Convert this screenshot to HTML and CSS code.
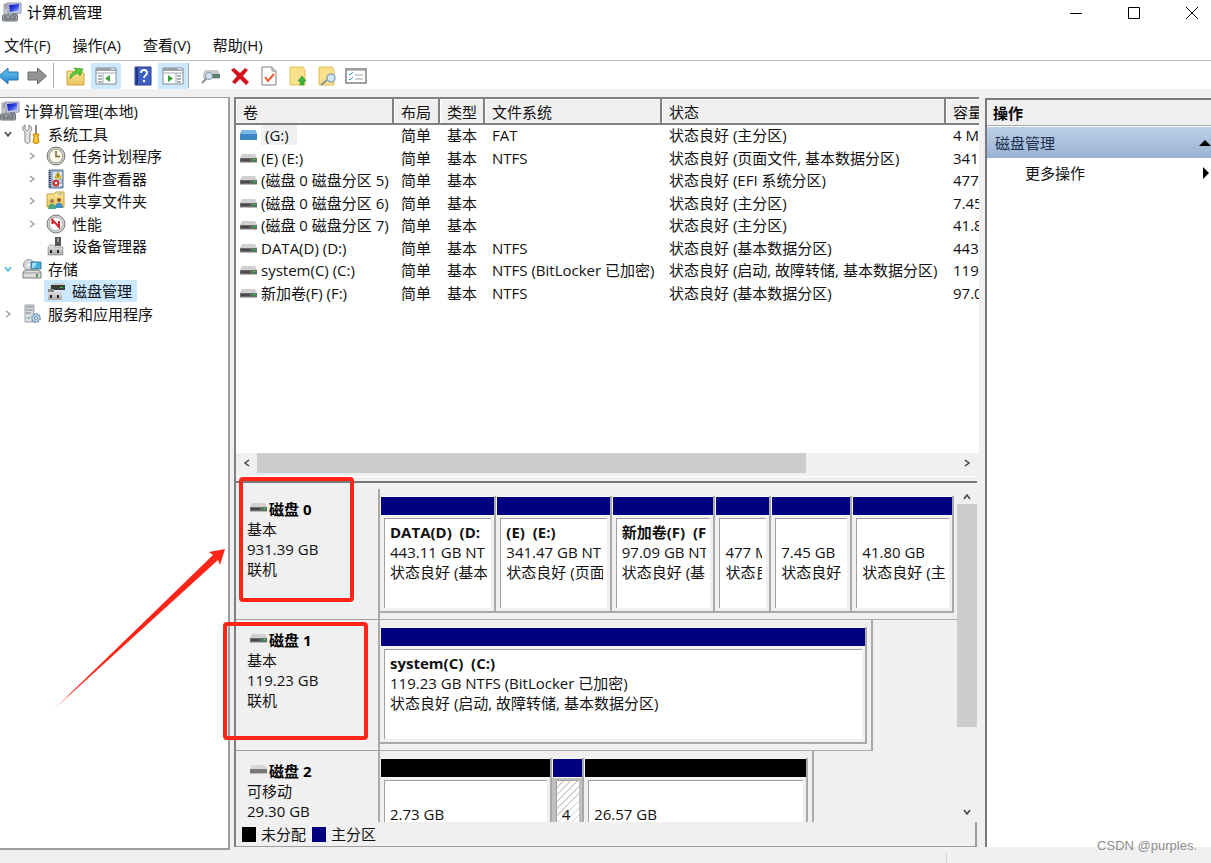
FILE: index.html
```html
<!DOCTYPE html>
<html lang="zh-CN">
<head>
<meta charset="utf-8">
<title>计算机管理</title>
<link rel="stylesheet" href="styles.css">
</head>
<body>
<svg class="defs" aria-hidden="true">
  <defs>
    <linearGradient id="g-blue" x1="0" y1="0" x2="0" y2="1"><stop offset="0" stop-color="#6fc4f2"/><stop offset="1" stop-color="#1f86d0"/></linearGradient>
    <linearGradient id="g-screen" x1="0" y1="0" x2="1" y2="1"><stop offset="0" stop-color="#0a14a8"/><stop offset=".5" stop-color="#2b3fe0"/><stop offset="1" stop-color="#b7c8ff"/></linearGradient>
    <linearGradient id="g-metal" x1="0" y1="0" x2="0" y2="1"><stop offset="0" stop-color="#e4e4e4"/><stop offset="1" stop-color="#a9a9a9"/></linearGradient>
    <linearGradient id="g-folder" x1="0" y1="0" x2="0" y2="1"><stop offset="0" stop-color="#fbe69a"/><stop offset="1" stop-color="#e9c558"/></linearGradient>
    <symbol id="computer" viewBox="0 0 20 20">
      <path d="M5 1h14v10l-13 1z" fill="#c4c9dc" stroke="#8f96b4"/><path d="M7 3l10-1v7l-9 1z" fill="url(#g-screen)"/>
      <path d="M2 2h4v11H2z" fill="#c7c9d2" stroke="#83868f" stroke-width=".7"/><path d="M3 4h2M3 6h2" stroke="#777"/>
      <path d="M10 11h5l1 4h-6z" fill="#84889b"/><rect x=".5" y="13" width="15" height="6" rx="1" fill="#a4a8ad" stroke="#6d7276"/><path d="M2 15h3M7 15h3M11 15h3M2 17h12" stroke="#535b60"/>
    </symbol>
    <symbol id="tools" viewBox="0 0 20 20">
      <path d="M3 1v4l2 2 2-2V1c4 2 3 6 1 7v9c0 3-5 3-5 0V8C0 6 0 2 3 1z" fill="#e2e2e2" stroke="#858585"/>
      <path d="M13 1h2v9h-2z" fill="#8d8d8d"/><path d="M11 10h6l-1 3 1 5c-1 2-5 2-6 0l1-5z" fill="#f5b921" stroke="#c8860c"/><path d="M14 13v5" stroke="#ffe17a"/>
    </symbol>
    <symbol id="clock" viewBox="0 0 20 20">
      <circle cx="10" cy="10" r="9" fill="#c8c8c8" stroke="#777"/><circle cx="10" cy="10" r="6.8" fill="#fbf7ea" stroke="#a9a48f"/><path d="M10 5v5.5h4" fill="none" stroke="#7d6a31" stroke-width="1.5"/>
    </symbol>
    <symbol id="events" viewBox="0 0 20 20">
      <path d="M3 1h14v18H3z" fill="#9eb3cd" stroke="#54708f"/><path d="M7 3h9v14H7z" fill="#dfe8f2"/><path d="M4 3v15" stroke="#3b3f49" stroke-width="2" stroke-dasharray="1 1"/>
      <path d="M12 3l3 6H9z" fill="#ffe326" stroke="#c09c05"/><path d="M12 5v3" stroke="#333"/><circle cx="10" cy="14" r="3" fill="#e5403a" stroke="#b31f1b"/><path d="M9 13l2 2m0-2l-2 2" stroke="#fff"/><path d="M13 11h3M14 14h2" stroke="#6c87c0"/>
    </symbol>
    <symbol id="share" viewBox="0 0 20 20">
      <path d="M1 3h7l2-2h8v15H1z" fill="url(#g-folder)" stroke="#c99d35"/><path d="M12 3h4" stroke="#66a8d5"/>
      <circle cx="6" cy="10" r="2" fill="#a97749"/><circle cx="13" cy="9" r="2" fill="#8a5c35"/><path d="M2 18c0-7 8-7 8 0z" fill="#4aa97c"/><path d="M9 17c0-7 8-7 8 0z" fill="#3f8fc5"/>
    </symbol>
    <symbol id="perf" viewBox="0 0 20 20">
      <circle cx="10" cy="10" r="9" fill="#d2d2d2" stroke="#777"/><circle cx="10" cy="10" r="6.7" fill="#fff" stroke="#aaa"/><path d="M6.500 10V6l6.500 7V7" fill="none" stroke="#d3212a" stroke-width="2"/>
    </symbol>
    <symbol id="device" viewBox="0 0 20 20">
      <path d="M9 1h6v9H9z" fill="#555"/><path d="M11 2h2v4h-2z" fill="#999"/><path d="M4 9h4l1 2h8v8H2v-8z" fill="url(#g-metal)" stroke="#858585" stroke-width=".6"/><path d="M4 14h2v3H4zM11 14h2v3h-2z" fill="#222"/>
    </symbol>
    <symbol id="storage" viewBox="0 0 20 20">
      <circle cx="7" cy="6" r="5.5" fill="#d5d9df" stroke="#9097a0"/><circle cx="7" cy="6" r="1.5" fill="#fff"/><path d="M9 3h10v7H9z" fill="#3fb0e0" stroke="#437990"/><path d="M10 4h5l-3 5h-2z" fill="#a0def6"/>
      <path d="M1 13l3-2h12l3 2v6H1z" fill="#dcdcdc" stroke="#787878"/><path d="M2 14h16" stroke="#999"/><path d="M14 15h2v3h-2z" fill="#46a344"/>
    </symbol>
    <symbol id="diskmgmt" viewBox="0 0 20 20">
      <path d="M4 4l3-2h11l1 2v5H4z" fill="#c8cac8"/><path d="M5 4h14v5H5z" fill="#3a3e3a"/><path d="M14 6h3v1h-3z" fill="#46c246"/><path d="M2 10h14v9H2z" fill="url(#g-metal)"/><path d="M4 14h2v3H4zM11 14h2v3h-2z" fill="#222"/><path d="M2 8h6v3H2z" fill="#888"/>
    </symbol>
    <symbol id="services" viewBox="0 0 20 20">
      <path d="M3 1h9v17H3z" fill="#d9dde1" stroke="#9aa1a8"/><path d="M4 3h7M4 6h7M4 9h5" stroke="#7c848c"/><path d="M5 14h3" stroke="#55aa55"/>
      <circle cx="14" cy="14" r="4" fill="#c0d8ed" stroke="#789ebe" stroke-width="2" stroke-dasharray="2 1"/><circle cx="14" cy="14" r="1.5" fill="#fff" stroke="#6a8dac"/>
    </symbol>
    <symbol id="drive" viewBox="0 0 17 11">
      <path d="M2 1h13l2 4H0z" fill="#d0d0d0"/><path d="M0 5h17v4H0z" fill="#6a6f6c"/><path d="M0 9h17v1H0z" fill="#b9b9b9"/><path d="M1 6h9v2H1z" fill="#484848"/><path d="M12 6h4v2h-4z" fill="#2e8a43"/><path d="M14 6h1v1h-1z" fill="#71e77f"/>
    </symbol>
    <symbol id="removable" viewBox="0 0 17 11">
      <path d="M2 0h13l2 4v6H0V4z" fill="#3f86c6"/><path d="M2 0h13l2 4H0z" fill="#78b7e6"/>
    </symbol>
    <symbol id="blankdrive" viewBox="0 0 17 11"><path d="M2 1h13l2 4H0z" fill="#d7d7d7"/><path d="M0 5h17v4H0z" fill="#777"/><path d="M0 9h17v1H0z" fill="#bcbcbc"/></symbol>
    <symbol id="arrow-left" viewBox="0 0 20 20"><path d="M-1 10l9-8v4h10v8H8v4z" stroke-linejoin="round"/></symbol>
    <symbol id="arrow-right" viewBox="0 0 20 20"><path d="M19.500 10l-9-8v4H1v8h9.500v4z" stroke-linejoin="round"/></symbol>
    <symbol id="folder-up" viewBox="0 0 20 20">
      <path d="M1 5h6l2 2h9v12H1z" fill="url(#g-folder)" stroke="#cda341"/><path d="M4 13c0-5 2-7 6-8l-2-3 9 1-3 7-2-3c-4 1-5 3-8 6z" fill="#5cc936" stroke="#3b9d20" stroke-width=".7"/>
    </symbol>
    <symbol id="pane-left" viewBox="0 0 22 18">
      <path d="M1 1h20v16H1z" fill="#fff" stroke="#868c93"/><path d="M1 1h20v3H1z" fill="#9aa1a9"/><path d="M16 2h4" stroke="#fff"/><path d="M1 6h20M8 6v11" stroke="#a5abb1"/><path d="M3 9h4M3 12h4M3 15h4" stroke="#5f6b78"/><path d="M15 8v7l-5-3.500z" fill="#35a435"/>
    </symbol>
    <symbol id="pane-right" viewBox="0 0 22 18">
      <path d="M1 1h20v16H1z" fill="#fff" stroke="#868c93"/><path d="M1 1h20v3H1z" fill="#9aa1a9"/><path d="M16 2h4" stroke="#fff"/><path d="M1 6h20M14 6v11" stroke="#a5abb1"/><path d="M15 9h4M15 12h4M15 15h4" stroke="#5f6b78"/><path d="M6 8v7l5-3.500z" fill="#35a435"/>
    </symbol>
    <symbol id="help" viewBox="0 0 18 20">
      <path d="M1 1h16v18H1z" fill="#3f5fc4" stroke="#2c3f8e"/><path d="M2 1h2v18H2z" fill="#24377f"/><path d="M7 7c0-4 6-4 6 0 0 2-3 2.500-3 5" fill="none" stroke="#fff" stroke-width="1.800"/><circle cx="10" cy="15" r="1.200" fill="#fff"/>
    </symbol>
    <symbol id="rescan" viewBox="0 0 20 20">
      <path d="M4 4h13l2 4v5H2V8z" fill="#c9ccce"/><path d="M5 8h14v4H5z" fill="#6a7478"/><path d="M14 9h3v2h-3z" fill="#2f9c46"/><circle cx="8" cy="10" r="3.500" fill="#cfe4f1" stroke="#849aaa"/><path d="M5.500 12.500L1 17" stroke="#8a9299" stroke-width="2"/>
    </symbol>
    <symbol id="delete" viewBox="0 0 20 20"><path d="M1 4l3-2 6 5 5-5 3 2-5 6 6 6-3 3-6-6-5 5-3-2 5-6z" fill="#d4121e"/></symbol>
    <symbol id="doc-check" viewBox="0 0 16 20"><path d="M1 1h10l4 4v14H1z" fill="#fdfdfd" stroke="#7f7f7f"/><path d="M11 1v4h4" fill="#ddd" stroke="#8f8f8f"/><path d="M4 11l3 4 6-7" fill="none" stroke="#ee5b32" stroke-width="2"/></symbol>
    <symbol id="doc-up" viewBox="0 0 18 20"><path d="M1 1h13l2 3v15H1z" fill="#fae08b" stroke="#dfbf5b"/><path d="M13 10l4 5h-2v4h-4v-4H9z" fill="#3cb53a" stroke="#238522" stroke-width=".5"/></symbol>
    <symbol id="doc-find" viewBox="0 0 20 20"><path d="M2 1h13l2 3v15H2z" fill="#fae08b" stroke="#dfbf5b"/><path d="M10 14l-6 5" stroke="#8d9499" stroke-width="2"/><circle cx="14" cy="12" r="4" fill="#cfe6f4" stroke="#8aa7bb" stroke-width="1.500"/></symbol>
    <symbol id="list" viewBox="0 0 22 18"><path d="M1 2h20v14H1z" fill="#fff" stroke="#7c8287" stroke-width="1.500"/><path d="M1 3h20" stroke="#8c9298"/><path d="M4 7l1 1 3-3M4 12l1 1 3-3" fill="none" stroke="#4096cf"/><path d="M10 8h8M10 12h8" stroke="#9fa6ac"/></symbol>
    <symbol id="chevron" viewBox="0 0 10 10"><path d="M3 2l4 3-4 3" fill="none" stroke="currentColor" stroke-width="1.500"/></symbol>
  </defs>
</svg>

<div class="window">
  <header class="titlebar">
    <svg class="icon"><use href="#computer"/></svg>
    <h1>计算机管理</h1>
    <div class="controls">
      <button aria-label="最小化"><svg viewBox="0 0 12 12"><path d="M0 6.500h12"/></svg></button>
      <button aria-label="最大化"><svg viewBox="0 0 12 12"><path d="M.5.5h11v11H.5z"/></svg></button>
      <button aria-label="关闭"><svg viewBox="0 0 12 12"><path d="M0 0l12 12M12 0L0 12"/></svg></button>
    </div>
  </header>
  <nav class="menubar">
    <button>文件(F)</button><button>操作(A)</button><button>查看(V)</button><button>帮助(H)</button>
  </nav>
  <div class="toolbar">
    <button class="back" aria-label="后退"><svg class="icon"><use href="#arrow-left"/></svg></button>
    <button class="forward" aria-label="前进"><svg class="icon"><use href="#arrow-right"/></svg></button>
    <span class="sep"></span>
    <button aria-label="上一级"><svg class="icon"><use href="#folder-up"/></svg></button>
    <button class="on" aria-label="显示控制台树"><svg class="icon wide"><use href="#pane-left"/></svg></button>
    <button class="after" aria-label="帮助"><svg class="icon"><use href="#help"/></svg></button>
    <button class="on" aria-label="显示操作窗格"><svg class="icon wide"><use href="#pane-right"/></svg></button>
    <span class="sep"></span>
    <button aria-label="重新扫描"><svg class="icon"><use href="#rescan"/></svg></button>
    <button aria-label="删除"><svg class="icon"><use href="#delete"/></svg></button>
    <button aria-label="属性"><svg class="icon"><use href="#doc-check"/></svg></button>
    <button aria-label="打开"><svg class="icon"><use href="#doc-up"/></svg></button>
    <button aria-label="查找"><svg class="icon"><use href="#doc-find"/></svg></button>
    <button aria-label="设置"><svg class="icon wide"><use href="#list"/></svg></button>
  </div>

  <main class="panes">
    <ul class="tree">
      <li class="root"><svg class="icon"><use href="#computer"/></svg><span>计算机管理(本地)</span></li>
      <li class="open dark"><svg class="chev"><use href="#chevron"/></svg><svg class="icon"><use href="#tools"/></svg><span>系统工具</span></li>
      <li class="sub"><svg class="chev"><use href="#chevron"/></svg><svg class="icon"><use href="#clock"/></svg><span>任务计划程序</span></li>
      <li class="sub"><svg class="chev"><use href="#chevron"/></svg><svg class="icon"><use href="#events"/></svg><span>事件查看器</span></li>
      <li class="sub"><svg class="chev"><use href="#chevron"/></svg><svg class="icon"><use href="#share"/></svg><span>共享文件夹</span></li>
      <li class="sub"><svg class="chev"><use href="#chevron"/></svg><svg class="icon"><use href="#perf"/></svg><span>性能</span></li>
      <li class="sub"><i class="chev"></i><svg class="icon"><use href="#device"/></svg><span>设备管理器</span></li>
      <li class="open cyan"><svg class="chev"><use href="#chevron"/></svg><svg class="icon"><use href="#storage"/></svg><span>存储</span></li>
      <li class="sub"><i class="chev"></i><div class="selected"><svg class="icon"><use href="#diskmgmt"/></svg><span>磁盘管理</span></div></li>
      <li><svg class="chev"><use href="#chevron"/></svg><svg class="icon"><use href="#services"/></svg><span>服务和应用程序</span></li>
    </ul>

    <section class="center">
      <div class="volumes">
        <table>
          <colgroup><col class="c-vol"><col class="c-layout"><col class="c-type"><col class="c-fs"><col class="c-state"><col class="c-size"></colgroup>
          <thead><tr><th>卷</th><th>布局</th><th>类型</th><th>文件系统</th><th>状态</th><th>容量</th></tr></thead>
          <tbody>
            <tr><td><svg class="drive"><use href="#removable"/></svg><span class="focus">(G:)</span></td><td>简单</td><td>基本</td><td>FAT</td><td>状态良好 (主分区)</td><td>4 M</td></tr>
            <tr><td><svg class="drive"><use href="#drive"/></svg>(E) (E:)</td><td>简单</td><td>基本</td><td>NTFS</td><td>状态良好 (页面文件, 基本数据分区)</td><td>341</td></tr>
            <tr><td><svg class="drive"><use href="#drive"/></svg>(磁盘 0 磁盘分区 5)</td><td>简单</td><td>基本</td><td></td><td>状态良好 (EFI 系统分区)</td><td>477</td></tr>
            <tr><td><svg class="drive"><use href="#drive"/></svg>(磁盘 0 磁盘分区 6)</td><td>简单</td><td>基本</td><td></td><td>状态良好 (主分区)</td><td>7.45</td></tr>
            <tr><td><svg class="drive"><use href="#drive"/></svg>(磁盘 0 磁盘分区 7)</td><td>简单</td><td>基本</td><td></td><td>状态良好 (主分区)</td><td>41.8</td></tr>
            <tr><td><svg class="drive"><use href="#drive"/></svg>DATA(D) (D:)</td><td>简单</td><td>基本</td><td>NTFS</td><td>状态良好 (基本数据分区)</td><td>443</td></tr>
            <tr><td><svg class="drive"><use href="#drive"/></svg>system(C) (C:)</td><td>简单</td><td>基本</td><td>NTFS (BitLocker 已加密)</td><td>状态良好 (启动, 故障转储, 基本数据分区)</td><td>119</td></tr>
            <tr><td><svg class="drive"><use href="#drive"/></svg>新加卷(F) (F:)</td><td>简单</td><td>基本</td><td>NTFS</td><td>状态良好 (基本数据分区)</td><td>97.0</td></tr>
          </tbody>
        </table>
      </div>
      <div class="hscroll">
        <button class="left" aria-label="向左滚动"><svg class="chev"><use href="#chevron"/></svg></button>
        <div class="track"><div class="thumb"></div></div>
        <button aria-label="向右滚动"><svg class="chev"><use href="#chevron"/></svg></button>
      </div>
      <div class="splitter"></div>
      <div class="graph">
        <div class="disks">
          <article class="disk">
            <div class="info"><h2><svg class="drive"><use href="#drive"/></svg>磁盘 0</h2><p>基本</p><p>931.39 GB</p><p>联机</p></div>
            <div class="map"><div class="parts full">
              <div class="part" style="flex-grow:117"><div class="bar"></div><div class="body"><b>DATA(D)&nbsp; (D:</b><p>443.11 GB NT</p><p>状态良好 (基本</p></div></div>
              <div class="part" style="flex-grow:116"><div class="bar"></div><div class="body"><b>(E)&nbsp; (E:)</b><p>341.47 GB NT</p><p>状态良好 (页面</p></div></div>
              <div class="part" style="flex-grow:104"><div class="bar"></div><div class="body"><b>新加卷(F)&nbsp; (F</b><p>97.09 GB NT</p><p>状态良好 (基</p></div></div>
              <div class="part" style="flex-grow:55"><div class="bar"></div><div class="body"><b>&nbsp;</b><p>477 M</p><p>状态良</p></div></div>
              <div class="part" style="flex-grow:81"><div class="bar"></div><div class="body"><b>&nbsp;</b><p>7.45 GB</p><p>状态良好</p></div></div>
              <div class="part" style="flex-grow:102"><div class="bar"></div><div class="body"><b>&nbsp;</b><p>41.80 GB</p><p>状态良好 (主</p></div></div>
            </div></div>
          </article>
          <article class="disk">
            <div class="info"><h2><svg class="drive"><use href="#drive"/></svg>磁盘 1</h2><p>基本</p><p>119.23 GB</p><p>联机</p></div>
            <div class="map"><div class="parts" style="width:85.4%">
              <div class="part" style="flex-grow:1"><div class="bar"></div><div class="body"><b>system(C)&nbsp; (C:)</b><p>119.23 GB NTFS (BitLocker 已加密)</p><p>状态良好 (启动, 故障转储, 基本数据分区)</p></div></div>
            </div></div>
          </article>
          <article class="disk">
            <div class="info"><h2><svg class="drive"><use href="#blankdrive"/></svg>磁盘 2</h2><p>可移动</p><p>29.30 GB</p></div>
            <div class="map"><div class="parts" style="width:75.2%">
              <div class="part free" style="flex-grow:173"><div class="bar"></div><div class="body"><b>&nbsp;</b><p>2.73 GB</p></div></div>
              <div class="part picked" style="flex-grow:31"><div class="bar"></div><div class="body"><b>&nbsp;</b><p>4</p></div></div>
              <div class="part free" style="flex-grow:226"><div class="bar"></div><div class="body"><b>&nbsp;</b><p>26.57 GB</p></div></div>
            </div></div>
          </article>
        </div>
        <div class="vscroll">
          <button class="up" aria-label="向上滚动"><svg class="chev"><use href="#chevron"/></svg></button>
          <div class="track"><div class="thumb"></div></div>
          <button class="down" aria-label="向下滚动"><svg class="chev"><use href="#chevron"/></svg></button>
        </div>
      </div>
      <div class="legend"><i class="black"></i><span>未分配</span><i class="navy"></i><span>主分区</span></div>
    </section>

    <aside class="actions">
      <h2>操作</h2>
      <button class="group"><span>磁盘管理</span><svg viewBox="0 0 12 6" width="12" height="6"><path d="M0 6l6-6 6 6z"/></svg></button>
      <button class="more"><span>更多操作</span><svg viewBox="0 0 6 12" width="6" height="12"><path d="M0 0l6 6-6 6z"/></svg></button>
    </aside>
  </main>
  <footer class="statusbar"><span></span><span></span></footer>

  <div class="mark mark-a"></div>
  <div class="mark mark-b"></div>
  <svg class="pointer" viewBox="0 0 174 163"><defs><linearGradient id="g-tail" x1="0" y1="1" x2="1" y2="0"><stop offset="0" stop-color="#ff2418" stop-opacity=".1"/><stop offset=".12" stop-color="#ff2418"/></linearGradient></defs><path d="M0 163L162 6l-4-3 16-3-5 16-2-5z" fill="url(#g-tail)"/></svg>
  <span class="watermark">CSDN @purples.</span>
</div>
</body>
</html>
```
FILE: styles.css
```css
* { box-sizing: border-box; }
body { margin: 0; font: 15px/20px "Open Sans", "Noto Sans CJK SC", sans-serif; color: #111; background: #f0f0f0; }
h1, h2, p, ul { margin: 0; padding: 0; font-size: 15px; }
button { font: inherit; color: inherit; border: 0; padding: 0; background: none; }
.defs { position: absolute; width: 0; height: 0; }
.icon { width: 20px; height: 20px; flex: none; }
.icon.wide { width: 22px; }
.chev { width: 10px; height: 10px; flex: none; display: block; }
.drive { width: 17px; height: 11px; flex: none; }

.window { position: relative; height: 100vh; overflow: hidden; display: flex; flex-direction: column; }
.titlebar { height: 30px; flex: none; background: #fff; display: flex; align-items: flex-start; gap: 5px; padding: 2px 0 0 2px; }
.titlebar h1 { font-weight: 400; color: #000; }
.controls { margin-left: auto; display: flex; }
.controls button { width: 58px; height: 22px; display: grid; place-items: center; }
.controls button:last-child { width: 48px; padding-left: 23px; justify-items: start; }
.controls svg { width: 12px; height: 12px; overflow: visible; fill: none; stroke: #000; }

.menubar { height: 30px; flex: none; background: #fff; display: flex; align-items: center; gap: 22px; padding: 0 4px; }
.toolbar { height: 29px; flex: none; background: #fff; border-top: 1px solid #bcbcbc; padding-top: 1px; display: flex; align-items: center; }
.toolbar button { width: 29px; height: 26px; flex: none; display: grid; place-items: center; }
.toolbar .back { width: 22px; justify-items: start; fill: url(#g-blue); stroke: #2673ad; }
.toolbar .forward { fill: #939393; stroke: #6f6f6f; }
.toolbar .on { width: 30px; margin-left: 1px; background: #cce8ff; }
.toolbar .after { margin-left: 7px; }
.sep { width: 1px; height: 25px; background: #a9a9a9; margin: 0 7px 0 2px; }
.on + .sep { margin: 0 7px 0 0; }

.panes { flex: 1; min-height: 0; display: grid; grid-template: minmax(0, 1fr) / 230px minmax(0, 1fr) 226px; padding-top: 8px; }
.tree { list-style: none; background: #fff; border: solid #9b9da0; border-width: 1px 2px 2px 0; padding-top: 2px; overflow: hidden; }
.tree li { height: 22px; display: flex; align-items: center; gap: 4px; padding-left: 3px; color: #a0a0a0; white-space: nowrap; }
.tree li:nth-child(even) { height: 23px; }
.tree span { color: #111; padding-left: 2px; }
.tree .chev { margin-right: 5px; }
.tree .root { padding-left: 0; gap: 2px; }
.tree .sub { padding-left: 27px; }
.tree .open .chev { transform: rotate(90deg); }
.tree .dark { color: #444; }
.tree .cyan { color: #3cb9cf; }
.selected { display: flex; gap: 4px; align-items: center; height: 22px; padding: 0 5px 0 2px; margin-left: -2px; background: #cce8ff; }

.center { margin: 0 6px 3px 4px; min-width: 0; border-left: 2px solid #7e8085; display: flex; flex-direction: column; }
.volumes { height: 356px; overflow: hidden; background: #fff; border-top: 2px solid #808080; flex: none; }
table { width: 800px; table-layout: fixed; border-collapse: separate; border-spacing: 0; }
.c-vol { width: 158px; }
.c-layout { width: 46px; }
.c-type { width: 45px; }
.c-fs { width: 177px; }
.c-state { width: 284px; }
th, td { text-align: left; font-weight: 400; padding: 0 0 0 7px; white-space: nowrap; height: 22px; }
th { height: 26px; line-height: 22px; background: #f0f0f0; border: solid #808080; border-width: 0 2px 2px 0; box-shadow: inset 1px 1px #fff; padding-top: 2px; }
tbody { line-height: 18px; }
tr:nth-child(even) td { height: 23px; }
td:first-child { padding-left: 4px; }
td { padding-bottom: 2px; }
td .drive { margin-right: 4px; }
.focus { display: inline-block; background: #f0f0f0; padding: 0 8px 0 4px; height: 20px; line-height: 20px; }

.hscroll { height: 20px; flex: none; display: flex; background: #f0f0f0; padding-right: 2px; }
.hscroll button { width: 21px; display: grid; place-items: center; color: #444; }
.left .chev { transform: rotate(180deg); }
.hscroll .track { flex: 1; }
.hscroll .thumb { width: 78.5%; height: 20px; background: #cdcdcd; }
.splitter { height: 10px; margin: 0 2px 6px 0; flex: none; background: linear-gradient(#f0f0f0 3px, #fff 3px, #fff 4px, #f0f0f0 4px); border-bottom: 2px solid #77797c; }
.graph { flex: 1; min-height: 0; display: flex; overflow: hidden; }
.disks { flex: 1; min-width: 0; overflow: hidden; }
.disk { height: 131px; display: grid; grid-template-columns: 142px minmax(0, 1fr); }
.info { border-bottom: 1px solid #a0a0a0; padding: 10px 11px; }
.info .drive { margin: 0 2px 0 3px; vertical-align: 2px; }
.info h2 { font-weight: 700; color: #000; }
.map { border-left: 2px solid #a9a9a9; min-width: 0; }
.parts { height: 131px; display: flex; padding: 7px 4px 6px 0; border: solid #a9a9a9; border-width: 0 2px 1px 0; }
.parts.full { border-right: 0; padding-right: 3px; }
.part { flex: 1 1 0; min-width: 0; display: flex; flex-direction: column; border: solid #a9a9a9; border-width: 0 2px 2px 0; }
.bar { height: 20px; background: #000080; border: solid #f8f8f8; border-width: 1px 0 1px 1px; }
.free .bar { background: #000; }
.body { flex: 1; margin: 2px 3px 3px 4px; background: #fff; border: solid #a0a0a0; border-width: 1px 0 0 1px; padding: 3px 0 0 5px; white-space: nowrap; overflow: hidden; }
.body b, .body p { display: block; overflow: hidden; margin-right: 4px; }
.picked { background: #c0c0c0; }
.picked .body { background: repeating-linear-gradient(135deg, #fff 0 4px, #d2d2d2 4px 5px); }
.vscroll { width: 22px; padding-right: 2px; display: flex; flex-direction: column; color: #444; }
.vscroll button { height: 15px; display: grid; place-items: center; }
.vscroll .down { height: 21px; }
.up .chev { transform: rotate(-90deg); }
.down .chev { transform: rotate(90deg); }
.vscroll .track { flex: 1; }
.vscroll .thumb { height: 75%; background: #cdcdcd; }
.legend { height: 25px; flex: none; display: flex; align-items: center; gap: 5px; padding-left: 6px; margin-right: 2px; border: solid #9c9ea0; border-width: 0 2px 1px 0; }
.legend i { width: 14px; height: 15px; }
.black { background: #000; }
.navy { background: #000080; }
.legend i + span + i { margin-left: 1px; }

.actions { margin-top: 1px; margin-bottom: 3px; background: #fff; border: solid #77797c; border-width: 2px 0 0 2px; }
.actions h2 { height: 26px; padding: 3px 6px 0; background: #f0f0f0; border-bottom: 1px solid #a9a9a9; color: #000; }
.group, .more { width: 100%; height: 31px; display: flex; align-items: center; justify-content: space-between; padding: 0 0 0 8px; }
.group { margin-top: 1px; background: linear-gradient(#bccfe6, #9ab3d3); color: #1b304f; }
.group svg, .more svg { fill: #000; }
.more { padding: 0 2px 2px 38px; }
.statusbar { height: 13px; flex: none; display: grid; grid-template-columns: 1fr 265px; padding-top: 3px; }
.statusbar span + span { border-left: 1px solid #d5d5d5; }

.mark { position: absolute; border: 4px solid #ff2418; border-radius: 4px; }
.mark-a { left: 239px; top: 477px; width: 115px; height: 125px; }
.mark-b { left: 223px; top: 622px; width: 145px; height: 118px; }
.pointer { position: absolute; left: 51px; top: 549px; width: 174px; height: 163px; }
.watermark { position: absolute; right: 14px; bottom: 7px; font: 13px/20px "Liberation Sans", sans-serif; color: #8c8c8c; }
```
